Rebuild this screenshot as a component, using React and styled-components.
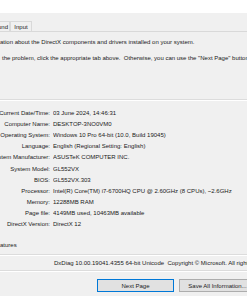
import styled, { createGlobalStyle } from "styled-components";

const GlobalStyles = createGlobalStyle`
  html, body {
    margin: 0;
    padding: 0;
    background: #f0f0f0;
  }
  body {
    font-family: "Liberation Sans", Arial, sans-serif;
    color: #1a1a1a;
  }
`;

const Window = styled.div`
  width: 247px;
  height: 296px;
  overflow: hidden;
  display: flex;
  flex-direction: column;
  background: #f0f0f0;
  font-size: 6px;
`;

const TitleBar = styled.div`
  height: 13px;
  background: #ffffff;
  flex-shrink: 0;
`;

const TabStrip = styled.div`
  height: 18px;
  display: flex;
  align-items: flex-end;
  border-bottom: 1px solid #d9d9d9;
  flex-shrink: 0;
`;

const Tab = styled.div`
  height: 10px;
  width: ${(props) => props.width}px;
  margin-left: ${(props) => props.offset || 0}px;
  border: 1px solid #d9d9d9;
  border-bottom: none;
  display: flex;
  align-items: center;
  justify-content: ${(props) => (props.clip ? "flex-end" : "center")};
  overflow: hidden;
  white-space: nowrap;
  padding: 0 1px;
  box-sizing: border-box;
  background: #f0f0f0;
`;

const Intro = styled.div`
  padding-top: 6px;
  display: flex;
  flex-direction: column;
  gap: 8px;
  white-space: nowrap;
  line-height: 8px;
`;

const IntroLine = styled.div`
  padding-left: ${(props) => props.indent || 0}px;
`;

const Separator = styled.div`
  height: 0;
  border-top: 1px solid #dcdcdc;
  border-bottom: 1px solid #ffffff;
  margin-top: ${(props) => props.top || 0}px;
  flex-shrink: 0;
`;

const InfoList = styled.div`
  margin-top: 6px;
  display: flex;
  flex-direction: column;
`;

const InfoRow = styled.div`
  display: grid;
  grid-template-columns: 50px 1fr;
  column-gap: 3px;
  height: 11.2px;
  align-items: center;
  white-space: nowrap;
`;

const Label = styled.div`
  display: flex;
  justify-content: flex-end;
  overflow: hidden;
`;

const Value = styled.div`
  overflow: hidden;
`;

const Features = styled.div`
  margin-top: 11px;
  height: 8px;
  line-height: 8px;
  white-space: nowrap;
`;

const Footer = styled.div`
  height: 14px;
  display: flex;
  align-items: center;
  padding-left: 54px;
  white-space: nowrap;
  overflow: hidden;
`;

const ButtonRow = styled.div`
  margin-top: 7px;
  display: flex;
  gap: 5px;
  padding-left: 97px;
`;

const Button = styled.div`
  flex-shrink: 0;
  width: 77px;
  height: 13px;
  box-sizing: border-box;
  border: 1px solid ${(props) => (props.primary ? "#0078d7" : "#adadad")};
  background: #e1e1e1;
  display: flex;
  align-items: center;
  justify-content: center;
  white-space: nowrap;
`;

const rows = [
  ["Current Date/Time:", "03 June 2024, 14:46:31"],
  ["Computer Name:", "DESKTOP-3NO0VM0"],
  ["Operating System:", "Windows 10 Pro 64-bit (10.0, Build 19045)"],
  ["Language:", "English (Regional Setting: English)"],
  ["System Manufacturer:", "ASUSTeK COMPUTER INC."],
  ["System Model:", "GL552VX"],
  ["BIOS:", "GL552VX.303"],
  ["Processor:", "Intel(R) Core(TM) i7-6700HQ CPU @ 2.60GHz (8 CPUs), ~2.6GHz"],
  ["Memory:", "12288MB RAM"],
  ["Page file:", "4149MB used, 10463MB available"],
  ["DirectX Version:", "DirectX 12"],
];

function App() {
  return (
    <>
      <GlobalStyles />
      <Window>
        <TitleBar />
        <TabStrip>
          <Tab width={11} offset={-1} clip>
            Sound
          </Tab>
          <Tab width={22}>Input</Tab>
        </TabStrip>

        <Intro>
          <IntroLine>
            ation about the DirectX components and drivers installed on your
            system.
          </IntroLine>
          <IntroLine indent={2}>
            the problem, click the appropriate tab above.&nbsp; Otherwise, you
            can use the "Next Page" button below to visit each page in
            sequence.
          </IntroLine>
        </Intro>

        <Separator top={37} />

        <InfoList>
          {rows.map(([label, value]) => (
            <InfoRow key={label}>
              <Label>
                <span>{label}</span>
              </Label>
              <Value>{value}</Value>
            </InfoRow>
          ))}
        </InfoList>

        <Features>atures</Features>

        <Separator top={5} />
        <Footer>
          DxDiag 10.00.19041.4355 64-bit Unicode&nbsp; Copyright © Microsoft.
          All rights reserved.
        </Footer>
        <Separator />

        <ButtonRow>
          <Button primary>Next Page</Button>
          <Button>Save All Information...</Button>
        </ButtonRow>
      </Window>
    </>
  );
}

export default App;
